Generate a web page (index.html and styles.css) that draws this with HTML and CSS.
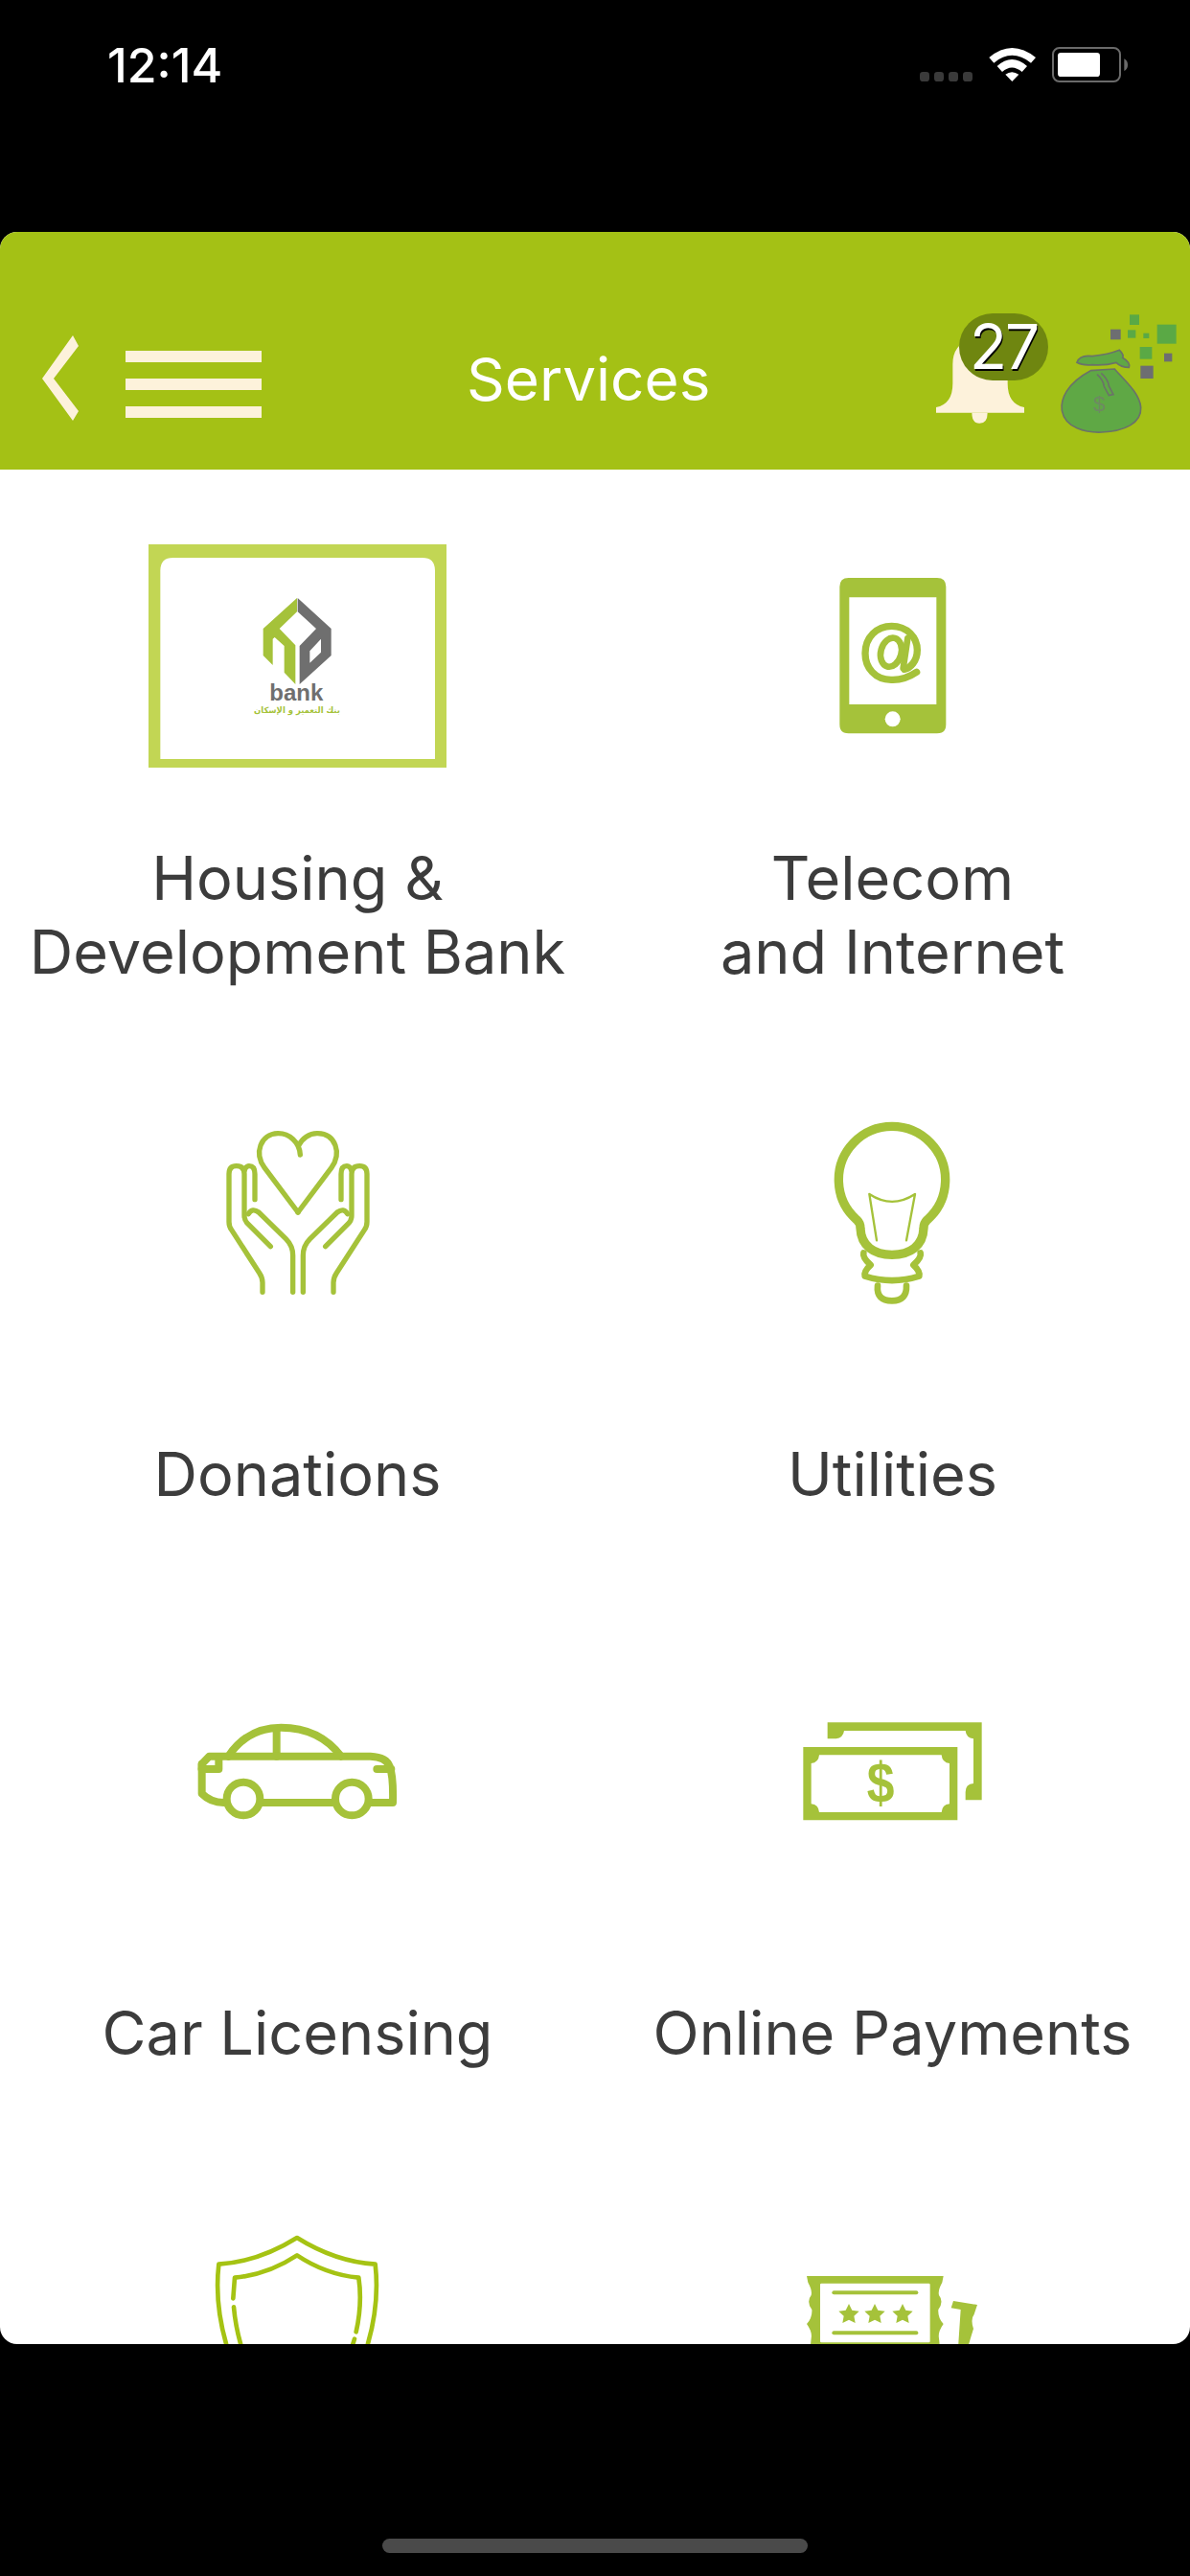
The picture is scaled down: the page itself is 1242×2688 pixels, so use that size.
FILE: index.html
```html
<!DOCTYPE html>
<html lang="en">
<head>
<meta charset="utf-8">
<title>Services</title>
<link rel="stylesheet" href="styles.css">
</head>
<body>
<div class="phone">
  <div class="status">
    <span class="time">12:14</span>
    <svg class="status-icons" viewBox="0 0 1026 210" aria-hidden="true">
      <g class="dots"><rect x="180" y="165" width="30" height="30" rx="10"/><rect x="225" y="165" width="30" height="30" rx="10"/><rect x="270" y="165" width="30" height="30" rx="10"/><rect x="315" y="165" width="30" height="30" rx="10"/></g>
      <g class="wifi">
        <path d="M397 120 Q468 60 543 120 L528 137 Q468 90 412 137 Z"/>
        <path d="M422 147 Q468 105 516 147 L500 165 Q468 138 438 165 Z"/>
        <path d="M448 173 Q468 158 490 173 L469 195 Z"/>
      </g>
      <rect class="batt-shell" x="597" y="90" width="210" height="105" rx="20"/>
      <rect class="batt-fill" x="612" y="105" width="132" height="75" rx="10"/>
      <path class="batt-tip" d="M820 124 Q831 130 831 143 Q831 156 820 162 Z"/>
    </svg>
  </div>

  <main class="card">
    <header class="header">
      <svg class="back" viewBox="0 0 38 89" aria-hidden="true"><path d="M32 0 L38 11 L12 45 L38 79 L32 89 L0 45 Z"/></svg>
      <div class="burger"><span></span><span></span><span></span></div>
      <h1 class="title">Services</h1>
      <div class="header-right">
        <svg class="header-art" viewBox="0 834 1026 576" aria-hidden="true">
          <g class="bell">
            <path d="M231 1215 Q283 1205 283 1140 L283 1080 Q283 1020 340 1000 L400 1000 Q455 1040 455 1080 L455 1140 Q455 1205 507 1215 V1232 H231 Z"/>
            <path d="M343 1232 H392 Q392 1265 367 1265 Q343 1265 343 1232 Z"/>
          </g>
          <g class="px-green"><rect x="837" y="925" width="30" height="32"/><rect x="831" y="973" width="25" height="25"/><rect x="880" y="983" width="18" height="16"/><rect x="923" y="956" width="60" height="60"/><rect x="869" y="1026" width="38" height="38"/></g>
          <g class="px-grey"><rect x="777" y="971" width="32" height="32"/><rect x="945" y="1046" width="25" height="26"/><rect x="871" y="1085" width="40" height="40"/></g>
          <g class="bag">
            <path d="M715 1100 C640 1140 620 1190 625 1225 C635 1280 700 1295 750 1293 C820 1290 875 1265 872 1215 C868 1170 820 1130 790 1095 Z"/>
            <path d="M672 1075 Q680 1050 720 1055 Q770 1050 805 1036 Q820 1050 815 1060 Q840 1075 835 1090 Q810 1090 795 1075 Q760 1085 720 1082 Q690 1085 672 1075 Z"/>
            <path class="bag-tie" d="M735 1112 Q755 1130 757 1150 L772 1178 L786 1175 L772 1148 Q770 1128 748 1108"/>
          </g>
          <text class="bag-dollar" x="742" y="1227">$</text>
        </svg>
        <span class="badge">27</span>
      </div>
    </header>

    <section class="grid">
      <a class="cell">
        <div class="icon-box">
          <svg class="icon" viewBox="45 54 933 699" aria-hidden="true">
            <path class="frame" fill-rule="evenodd" d="M45 54 H978 V753 H45 Z M122 96 Q82 96 82 136 V726 H942 V136 Q942 96 902 96 Z"/>
            <path class="solid" d="M510 222 V265 L455 318 L505 370 V492 L470 455 V372 L440 345 L434 350 V432 L404 402 V318 Z"/>
            <path class="logo-grey" fill-rule="evenodd" d="M512 222 L617 318 V402 L518 492 V372 L570 318 L512 265 Z M550 388 L585 350 V392 L550 425 Z"/>
            <text class="logo-bank" x="508" y="542" textLength="168" lengthAdjust="spacingAndGlyphs">bank</text>
            <text class="logo-ar" x="510" y="582" textLength="270" lengthAdjust="spacingAndGlyphs">بنك التعمير و الإسكان</text>
          </svg>
        </div>
        <span class="label">Housing &amp;<br>Development Bank</span>
      </a>
      <a class="cell">
        <div class="icon-box">
          <svg class="icon" viewBox="-192 -36 933 699" aria-hidden="true">
            <path class="solid" fill-rule="evenodd" d="M137 69 H414 Q442 69 442 97 V528 Q442 556 414 556 H137 Q109 556 109 528 V97 Q109 69 137 69 Z M139 130 V465 H412 V130 Z"/>
            <circle class="hole" cx="275" cy="511" r="24"/>
            <g class="line">
              <path class="w22" d="M350 364 Q312 390 270 388 C220 388 189 350 189 305 C189 255 225 220 272 220 C320 220 352 255 352 295 C352 330 330 352 312 355"/>
              <path class="w20" d="M322 258 L308 352"/>
              <ellipse class="w20" cx="270" cy="302" rx="32" ry="46" transform="rotate(15 270 302)"/>
            </g>
          </svg>
        </div>
        <span class="label">Telecom<br>and Internet</span>
      </a>
      <a class="cell">
        <div class="icon-box">
          <svg class="icon" viewBox="-135 3 933 699" aria-hidden="true">
            <g class="line w16">
              <path d="M333 345 L228 205 C195 160 215 100 270 98 C305 97 338 125 340 165"/>
              <path d="M333 345 L438 205 C470 160 452 100 395 98 C368 97 345 115 336 135"/>
              <g id="hand">
                <path d="M222 595 V565 Q222 550 212 535 L125 400 Q117 390 117 375 V225 Q117 200 140 200 Q165 200 165 225 V355 Q165 370 175 380 L247 452"/>
                <path d="M165 215 Q170 200 180 200 Q198 200 198 225 V305"/>
                <path d="M178 350 Q190 330 210 345 L295 428 Q317 450 317 480 V595"/>
              </g>
              <use href="#hand" transform="translate(666 0) scale(-1 1)"/>
            </g>
          </svg>
        </div>
        <span class="label">Donations</span>
      </a>
      <a class="cell">
        <div class="icon-box">
          <svg class="icon" viewBox="-132 3 933 699" aria-hidden="true">
            <g class="line">
              <path class="w28" d="M222 368 A167 167 0 1 1 444 368 Q432 378 432 395 C430 450 390 478 333 478 C276 478 236 450 234 395 Q234 378 222 368"/>
              <path class="w7" d="M285 433 L262 288 Q333 335 405 288 L378 433"/>
              <path class="w20" d="M244 472 Q240 486 266 510 Q244 530 248 545 Q333 572 418 545 Q422 530 400 510 Q426 486 422 472"/>
              <path class="w20" d="M288 575 Q283 622 333 622 Q380 622 378 575"/>
            </g>
          </svg>
        </div>
        <span class="label">Utilities</span>
      </a>
      <a class="cell">
        <div class="icon-box">
          <svg class="icon" viewBox="-105 -78 933 699" aria-hidden="true">
            <g class="line w24">
              <path d="M145 218 Q205 128 310 128 Q430 128 498 218"/>
              <path d="M296 135 V218"/>
              <path d="M62 258 V242 L85 218 H590 Q640 220 650 250 Q662 280 660 363 H585"/>
              <path d="M62 242 V335 Q90 363 130 363"/>
              <path d="M250 363 H470"/>
              <path d="M62 258 H115 V225"/>
              <path d="M610 258 H655"/>
              <circle cx="192" cy="351" r="52"/>
              <circle cx="532" cy="351" r="52"/>
            </g>
          </svg>
        </div>
        <span class="label">Car Licensing</span>
      </a>
      <a class="cell">
        <div class="icon-box">
          <svg class="icon" viewBox="-72 -138 933 699" aria-hidden="true">
            <path class="solid" d="M191 52 H674 V295 H623 V270 Q623 245 648 243 V103 Q625 100 623 78 H243 Q240 100 218 103 H191 Z"/>
            <path class="solid" fill-rule="evenodd" d="M115 129 H598 V358 H115 Z M165 154 Q163 178 140 180 V307 Q163 309 165 333 H548 Q550 309 573 307 V180 Q550 178 548 154 Z"/>
            <text class="cash-dollar" x="357" y="302" textLength="86" lengthAdjust="spacingAndGlyphs">$</text>
          </svg>
        </div>
        <span class="label">Online Payments</span>
      </a>
      <a class="cell">
        <div class="icon-box">
          <svg class="icon" viewBox="-105 51 933 699" aria-hidden="true">
            <g class="line-bright w14">
              <path d="M360 105 Q240 180 115 188 Q100 320 145 460 Q210 600 360 680 Q510 600 575 460 Q620 320 605 188 Q480 180 360 105 Z"/>
              <path d="M160 295 L165 230 Q270 220 360 160 Q450 220 553 230 Q565 310 545 400"/>
              <path d="M162 322 Q168 390 190 460"/>
              <path d="M540 422 L528 460"/>
            </g>
          </svg>
        </div>
      </a>
      <a class="cell">
        <div class="icon-box">
          <svg class="icon" viewBox="-132 -69 933 699" aria-hidden="true">
            <path class="solid" fill-rule="evenodd" d="M66 105 H494 L490 125 Q476 150 480 165 Q496 185 478 210 Q476 235 494 255 Q476 280 480 300 L490 400 H70 L80 300 Q84 280 66 255 Q84 235 82 210 Q64 185 80 165 Q84 150 70 125 Z M112 128 Q108 128 108 132 V309 Q108 313 112 313 H448 Q452 313 452 309 V132 Q452 128 448 128 Z"/>
            <path class="solid" d="M525 183 L600 195 L590 225 Q578 240 588 270 Q580 295 570 330 H540 L548 210 L518 205 Z"/>
            <g class="line w12"><path d="M151 157 H409"/><path d="M151 283 H409"/></g>
            <g class="solid">
              <path id="star" d="M198 192 L208 212 L230 215 L214 230 L218 252 L198 242 L178 252 L182 230 L166 215 L188 212 Z"/>
              <use href="#star" x="81"/>
              <use href="#star" x="168"/>
            </g>
          </svg>
        </div>
      </a>
    </section>
  </main>

  <div class="home-bar"><span class="home-indicator"></span></div>
</div>
</body>
</html>
```

FILE: styles.css
```css
* { box-sizing: border-box; }
html, body { margin: 0; padding: 0; background: #000; }
.phone {
  width: 1242px;
  height: 2688px;
  display: flex;
  flex-direction: column;
  font-family: Inter, "Liberation Sans", sans-serif;
  overflow: hidden;
}

/* status bar */
.status {
  height: 242px;
  flex: none;
  display: flex;
  justify-content: space-between;
  align-items: flex-start;
  padding: 20px 0 0 112px;
}
.time { margin-top: 20px; color: #fff; font-size: 50px; line-height: 56px; font-weight: 500; letter-spacing: 0; }
.status-icons { display: block; width: 342px; height: 70px; }
.dots { fill: #3a3a3a; }
.wifi { fill: #fff; }
.batt-shell { fill: none; stroke: #6a6a6a; stroke-width: 6; }
.batt-fill { fill: #fff; }
.batt-tip { fill: #6a6a6a; }

/* card */
.card {
  height: 2204px;
  flex: none;
  background: #fff;
  border-radius: 18px;
  overflow: hidden;
}
.header {
  height: 248px;
  background: #a4c115;
  display: flex;
  align-items: center;
  padding: 56px 0 0 44px;
}
.back { width: 38px; height: 89px; flex: none; fill: #fdf2db; }
.burger {
  width: 142px;
  flex: none;
  margin: 14px 0 0 49px;
  display: flex;
  flex-direction: column;
  gap: 17px;
}
.burger span { display: block; height: 12px; background: #fdf2db; }
.title {
  margin: 4px 0 0 214px;
  color: #fff;
  font-size: 62px;
  font-weight: 400;
  line-height: 72px;
}
.header-right {
  position: relative;
  margin-left: auto;
  width: 342px;
  height: 192px;
  flex: none;
}
.header-art { display: block; width: 342px; height: 192px; }
.bell { fill: #fdf2db; }
.px-green { fill: #5aa945; }
.px-grey { fill: #6d6e71; }
.bag path { fill: #5fa845; stroke: #6b7368; stroke-width: 5; }
.bag-dollar { fill: #6e8a62; font-family: "Liberation Sans", sans-serif; font-size: 68px; text-anchor: middle; }
.badge {
  position: absolute;
  left: 101px;
  top: 29px;
  width: 93px;
  height: 70px;
  border-radius: 35px;
  background: #6f8610;
  color: #fff;
  font-size: 64px;
  line-height: 70px;
  text-align: center;
  letter-spacing: -2px;
  text-shadow: 1px 2px 0 #000;
}

/* grid */
.grid {
  display: grid;
  grid-template-columns: 621px 621px;
  grid-auto-rows: 583px;
}
.cell {
  display: flex;
  flex-direction: column;
  align-items: center;
  padding-top: 78px;
}
.icon-box { width: 311px; height: 233px; flex: none; }
.icon { display: block; width: 311px; height: 233px; overflow: visible; }
.label {
  margin-top: 77px;
  height: 154px;
  display: flex;
  align-items: center;
  text-align: center;
  color: #3c3c3c;
  font-size: 63px;
  line-height: 77px;
}

/* icon paints */
.solid { fill: #a5c23a; }
.hole { fill: #fff; }
.frame { fill: #c2d654; }
.logo-grey { fill: #6f6f6f; }
.logo-bank { fill: #6f6f6f; font-family: "Liberation Sans", sans-serif; font-weight: 700; font-size: 72px; text-anchor: middle; }
.logo-ar { fill: #a5c23a; font-family: "DejaVu Sans", sans-serif; font-weight: 700; font-size: 26px; text-anchor: middle; }
.cash-dollar { fill: #a5c23a; font-family: "Liberation Sans", sans-serif; font-weight: 700; font-size: 180px; text-anchor: middle; }
.line path, .line circle, .line ellipse { fill: none; stroke: #a5c23a; stroke-linecap: round; stroke-linejoin: round; }
.line-bright path { fill: none; stroke: #a5c313; stroke-linecap: round; stroke-linejoin: round; }
.line .w7 { stroke-width: 7; }
.w12 { stroke-width: 12; }
.w14 { stroke-width: 14; }
.w16 { stroke-width: 16; }
.line .w20 { stroke-width: 20; }
.line .w22 { stroke-width: 22; }
.w24 { stroke-width: 24; }
.line .w28 { stroke-width: 28; }

/* home indicator */
.home-bar {
  flex: 1;
  display: flex;
  justify-content: center;
  padding-top: 203px;
}
.home-indicator { width: 444px; height: 15px; border-radius: 8px; background: #4a4a4a; }
```
